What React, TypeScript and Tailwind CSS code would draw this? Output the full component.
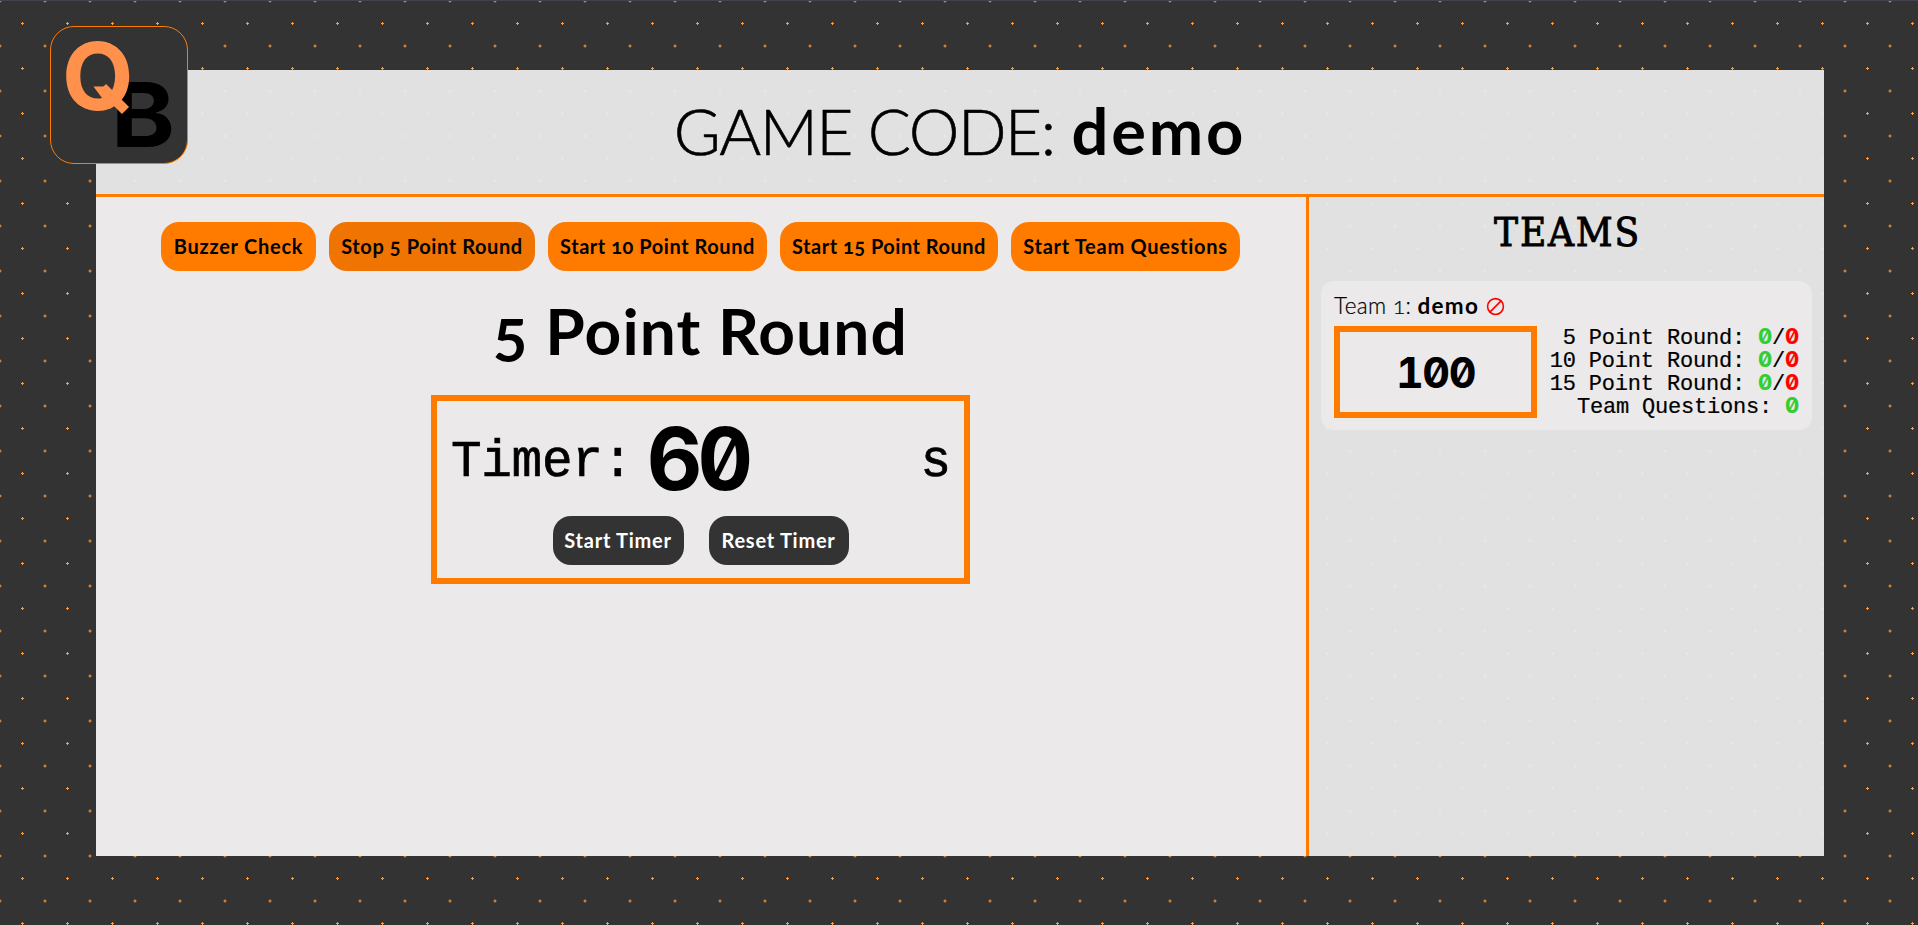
import { Ban } from "lucide-react";

const rounds = ["\u00a05 Point Round:", "10 Point Round:", "15 Point Round:"];

const actions = [
  { label: "Buzzer Check", style: "w-[155px] tracking-[0.75px] bg-[#ff7b00]" },
  { label: "Stop 5 Point Round", style: "w-[206px] tracking-[0.6px] bg-[#f07402]" },
  { label: "Start 10 Point Round", style: "w-[219px] tracking-[0.55px] bg-[#ff7b00]" },
  { label: "Start 15 Point Round", style: "w-[218px] tracking-[0.5px] bg-[#ff7b00]" },
  { label: "Start Team Questions", style: "w-[229px] tracking-[0.72px] bg-[#ff7b00]" },
];

const digits = "font-[Inter,sans-serif] font-bold [font-feature-settings:'zero','tnum']";

function Logo() {
  return (
    <svg
      viewBox="0 0 136 136"
      className="absolute left-[50px] top-[25px] size-[138px] rounded-[24px] border border-[#ff7b00] bg-[#333333]"
    >
      <clipPath id="bowl">
        <ellipse cx="46.5" cy="49" rx="33" ry="35.5" />
      </clipPath>
      <g fontFamily="Inter, sans-serif" fontWeight="700">
        <text x="60" y="120" fontSize="89.5" textLength="64" lengthAdjust="spacingAndGlyphs" fill="#000000">
          B
        </text>
        <text x="11" y="83" fontSize="94" textLength="72" lengthAdjust="spacingAndGlyphs" fill="#ff914d" clipPath="url(#bowl)">
          Q
        </text>
      </g>
      <path d="M51.5 60.5 74.5 83.5" stroke="#ff914d" strokeWidth="10" />
    </svg>
  );
}

function Header() {
  return (
    <header className="flex h-[127px] items-center justify-center border-b-[3px] border-[#ff7b00] bg-[#ebebeb]/95 pb-[4px]">
      <h1 className="flex items-baseline text-[64px] leading-none">
        <span className="font-light tracking-[-1.5px] [-webkit-text-stroke:0.6px_black]">GAME CODE:</span>
        <b className="ml-[17px] text-[65px] leading-none tracking-[2.8px]">demo</b>
      </h1>
    </header>
  );
}

function TimerPanel() {
  return (
    <section className="mt-[24px] flex h-[189px] w-[539px] flex-col items-center border-[6px] border-[#ff7b00]">
      <div className="flex h-[115px] w-full items-center pl-[14px] pr-[13px] font-['Liberation_Mono',monospace] text-[51px] [-webkit-text-stroke:0.7px_black]">
        <span className="pt-[9px] tracking-[-0.3px]">Timer:</span>
        <span className={`ml-[14px] w-[260px] text-[86px] leading-none tracking-[-5px] [-webkit-text-stroke:0] ${digits}`}>60</span>
        <span className="ml-auto pt-[9px]">s</span>
      </div>
      <div className="flex gap-[25px] text-[20px] font-bold tracking-[0.75px] text-white">
        <button className="h-[49px] w-[131px] rounded-[18px] bg-[#333333] pb-[2px]">Start Timer</button>
        <button className="h-[49px] w-[140px] rounded-[18px] bg-[#333333] pb-[2px]">Reset Timer</button>
      </div>
    </section>
  );
}

function TeamCard() {
  return (
    <article className="mx-[12px] mt-[25px] h-[149px] rounded-[13px] bg-[#ebe9ea] px-[13px] pt-[12px]">
      <div className="flex h-[27px] items-center text-[22.5px] leading-none">
        <span className="font-light tracking-[0.4px] [-webkit-text-stroke:0.2px_black]">Team 1:</span>
        <b className="ml-[6px] text-[22.5px] tracking-[1.3px]">demo</b>
        <Ban className="ml-[7px] size-[19px] -scale-x-100 text-[#ff0000]" strokeWidth={2} />
      </div>
      <div className="mt-[6px] flex justify-between">
        <div className={`flex h-[92px] w-[203px] items-center justify-center border-[6px] border-[#ff7b00] text-[43px] tracking-[-1.5px] ${digits}`}>
          100
        </div>
        <div className="pt-[1px] text-right font-['Liberation_Mono',monospace] text-[22px] leading-[23px] tracking-[-0.2px] [-webkit-text-stroke:0.2px_currentColor]">
          {rounds.map((label) => (
            <p key={label}>
              {label} <b className={`leading-0 text-[#32cd32] ${digits}`}>0</b>/<b className={`leading-0 text-[#ff0000] ${digits}`}>0</b>
            </p>
          ))}
          <p>
            Team Questions: <b className={`leading-0 text-[#32cd32] ${digits}`}>0</b>
          </p>
        </div>
      </div>
    </article>
  );
}

export default function App() {
  return (
    <div className="relative h-[925px] w-full overflow-hidden border-t border-[#42414d] bg-[#333333] [background-image:radial-gradient(#ff9a3c_1.1px,transparent_1.1px),radial-gradient(#ff9a3c_1.1px,transparent_1.1px)] [background-position:0_0,22.5px_22.5px] [background-size:45px_45px] px-[96px] pt-[69px] font-[Lato,sans-serif] text-black [font-feature-settings:'onum']">
      <div className="flex h-[786px] w-[1728px] flex-col">
        <Header />
        <div className="flex flex-1">
          <main className="flex w-[1210px] flex-col items-center bg-[#ebe9ea] pr-px pt-[25px]">
            <nav className="flex gap-[13px]">
              {actions.map((a) => (
                <button key={a.label} className={`h-[49px] rounded-[18px] pb-[2px] text-[20px] font-bold ${a.style}`}>
                  {a.label}
                </button>
              ))}
            </nav>
            <h2 className="mb-[2px] mt-[22px] text-[64px] font-bold leading-[76px] tracking-[1.1px]">5 Point Round</h2>
            <TimerPanel />
          </main>
          <aside className="flex-1 border-l-[3px] border-[#ff7b00] bg-[#ebebeb]/95 pt-[12px]">
            <h2 className="pl-[2px] text-center font-['DejaVu_Serif_Condensed','DejaVu_Serif',serif] text-[40px] leading-[47px] tracking-[1.8px] [-webkit-text-stroke:0.9px_black]">
              TEAMS
            </h2>
            <TeamCard />
          </aside>
        </div>
      </div>
      <Logo />
    </div>
  );
}
